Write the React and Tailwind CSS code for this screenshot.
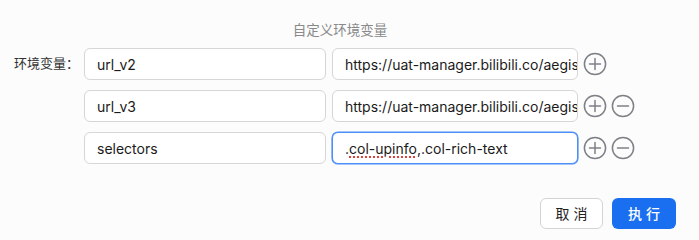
import React from "react";

const font = { fontFamily: '"Inter", "Noto Sans CJK SC", sans-serif' };

function Plus() {
  return (
    <svg width="24" height="24" viewBox="0 0 24 24" className="shrink-0">
      <circle cx="12" cy="12" r="10.6" fill="none" stroke="#7d8086" strokeWidth="1.5" />
      <path d="M12 6.5v11M6.5 12h11" stroke="#7d8086" strokeWidth="1.5" strokeLinecap="round" />
    </svg>
  );
}
function Minus() {
  return (
    <svg width="24" height="24" viewBox="0 0 24 24" className="shrink-0">
      <circle cx="12" cy="12" r="10.6" fill="none" stroke="#7d8086" strokeWidth="1.5" />
      <path d="M6.5 12h11" stroke="#7d8086" strokeWidth="1.5" strokeLinecap="round" />
    </svg>
  );
}

function Field({ width, children, focused }) {
  return (
    <div
      className={
        "h-[32px] rounded-[6px] bg-white flex items-center pl-[12px] pr-[4px] overflow-hidden whitespace-nowrap text-[14px] text-[#1a1a1a] " +
        (focused ? "border border-[#4a8ef6] shadow-[0_0_0_0.6px_#4a8ef6]" : "border border-[#d6d6d6]")
      }
      style={{ width }}
    >
      {children}
    </div>
  );
}

export default function App() {
  const url = "https://uat-manager.bilibili.co/aegis";
  return (
    <div className="w-[699px] h-[240px] bg-[#fcfcfc] flex flex-col" style={font}>
      <div className="flex justify-center mr-[19px] pt-[20px] h-[48px] text-[13.5px] text-[#8a8a8a]">
        自定义环境变量
      </div>
      <div className="flex flex-col gap-[10px] pl-[14px]">
        <div className="flex items-center">
          <div className="w-[70px] text-[13px] text-[#333]">环境变量：</div>
          <div className="flex items-center gap-[6px]">
            <Field width={242}>url_v2</Field>
            <Field width={246}>{url}</Field>
          </div>
          <div className="flex items-center gap-[4px] ml-[5px]">
            <Plus />
          </div>
        </div>
        <div className="flex items-center">
          <div className="w-[70px]" />
          <div className="flex items-center gap-[6px]">
            <Field width={242}>url_v3</Field>
            <Field width={246}>{url}</Field>
          </div>
          <div className="flex items-center gap-[4px] ml-[5px]">
            <Plus />
            <Minus />
          </div>
        </div>
        <div className="flex items-center">
          <div className="w-[70px]" />
          <div className="flex items-center gap-[6px]">
            <Field width={242}>selectors</Field>
            <Field width={246} focused>
              <span>
                .<span className="underline decoration-dotted decoration-[#e0403c] decoration-[1.5px] underline-offset-[3px]">col-upinfo</span>,.col-rich-text
              </span>
            </Field>
          </div>
          <div className="flex items-center gap-[4px] ml-[5px]">
            <Plus />
            <Minus />
          </div>
        </div>
      </div>
      <div className="flex justify-end gap-[9px] pr-[23px] mt-[34px]">
        <button className="w-[63px] h-[31px] rounded-[6px] border border-[#d4d4d4] bg-white text-[14px] text-[#222] tracking-[4px] pl-[4px]">
          取消
        </button>
        <button className="w-[64px] h-[31px] rounded-[6px] bg-[#1a6ff0] text-[14px] text-white font-medium tracking-[4px] pl-[4px]">
          执行
        </button>
      </div>
    </div>
  );
}
